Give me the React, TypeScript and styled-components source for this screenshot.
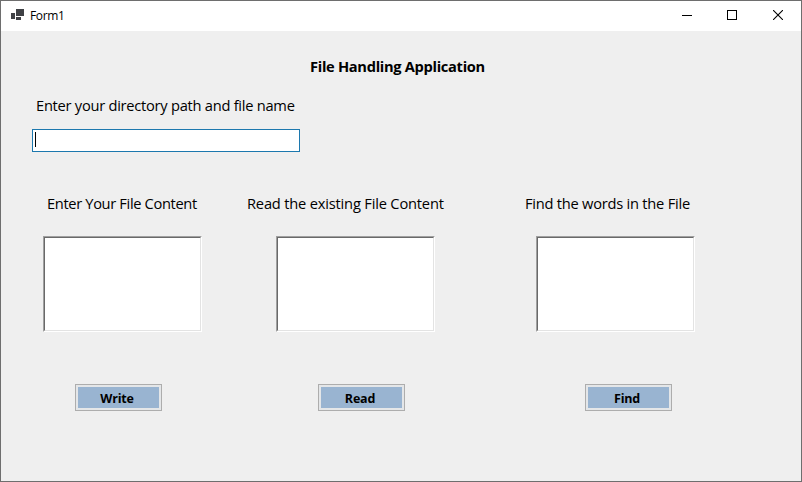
import React from "react";
import styled, { createGlobalStyle } from "styled-components";

const GlobalStyle = createGlobalStyle`
  *, *::before, *::after { box-sizing: border-box; }
  body { margin: 0; font-family: "Open Sans", "Noto Sans", sans-serif; color: #000; }
`;

const Window = styled.div`
  width: 802px;
  height: 482px;
  display: flex;
  flex-direction: column;
  border: 1px solid #6e6e6e;
  background: #efefef;
  overflow: hidden;
`;

const TitleBar = styled.header`
  flex: none;
  height: 30px;
  display: flex;
  align-items: center;
  background: #fff;
  padding-left: 10px;
`;

const AppIcon = styled.svg`
  margin-bottom: 2px;
`;

const WindowTitle = styled.span`
  flex: 1;
  padding-left: 6px;
  font-size: 12px;
  line-height: 28px;
  letter-spacing: -0.35px;
`;

const WindowButton = styled.button<{ $width: number }>`
  width: ${(p) => p.$width}px;
  height: 30px;
  padding: 0 0 2px;
  display: flex;
  align-items: center;
  justify-content: center;
  border: 0;
  background: transparent;
`;

const Form = styled.main`
  flex: 1;
  display: flex;
  flex-direction: column;
  align-items: flex-start;
`;

const Heading = styled.h1<{ $tracking: number }>`
  margin: 26px 0 2px 309px;
  font-size: 14.67px;
  font-weight: 700;
  line-height: 18px;
  white-space: nowrap;
  letter-spacing: ${(p) => p.$tracking}px;
`;

const Label = styled.label<{ $tracking: number; $indent?: number }>`
  margin: 0 0 2px ${(p) => p.$indent ?? 0}px;
  font-size: 14.67px;
  line-height: 18px;
  white-space: nowrap;
  letter-spacing: ${(p) => p.$tracking}px;
`;

const PathField = styled.div`
  display: flex;
  flex-direction: column;
  align-items: flex-start;
  gap: 13px;
  margin: 19px 0 0 31px;
`;

const PathInput = styled.div`
  width: 268px;
  height: 23px;
  padding: 2px;
  border: 1px solid #1c78ae;
  background: #fff;
`;

const Caret = styled.div`
  width: 1px;
  height: 15px;
  background: #000;
`;

const Columns = styled.section`
  display: grid;
  grid-template-columns: 204px 278px 200px;
  margin: 42px 0 0 42px;
`;

const Column = styled.div`
  display: flex;
  flex-direction: column;
  align-items: flex-start;
`;

const TextArea = styled.div<{ $indent: number }>`
  width: 159px;
  height: 96px;
  margin: 22px 0 0 ${(p) => p.$indent}px;
  border: 1px solid;
  border-color: #a0a0a0 #fff #fff #a0a0a0;
  background: #fff;

  &::before {
    content: "";
    display: block;
    height: 100%;
    border: 1px solid;
    border-color: #696969 #e3e3e3 #e3e3e3 #696969;
  }
`;

const ActionButton = styled.button<{ $indent: number }>`
  width: 87px;
  height: 27px;
  margin: 52px 0 0 ${(p) => p.$indent}px;
  padding: 2px 3px 0 0;
  border: 1px solid #adadad;
  box-shadow: inset 0 0 0 2px #e4e6e8;
  background: #99b4d1;
  color: #000;
  font: 700 12.5px/23px "Open Sans", "Noto Sans", sans-serif;
  letter-spacing: -0.2px;
  text-align: center;
`;

const columns = [
  { label: "Enter Your File Content", tracking: -0.35, labelIndent: 4, boxIndent: 0, action: "Write", buttonIndent: 32 },
  { label: "Read the existing File Content", tracking: -0.19, labelIndent: 0, boxIndent: 29, action: "Read", buttonIndent: 71 },
  { label: "Find the words in the File", tracking: -0.24, labelIndent: 0, boxIndent: 11, action: "Find", buttonIndent: 60 },
];

export default function App() {
  return (
    <>
      <GlobalStyle />
      <Window>
        <TitleBar>
          <AppIcon width="13" height="12" viewBox="0 0 13 12" fill="#3f4145" shapeRendering="crispEdges">
            <rect x="5" y="0" width="8" height="7" />
            <rect x="0" y="4" width="4" height="6" />
            <rect x="5" y="8" width="5" height="3" />
          </AppIcon>
          <WindowTitle>Form1</WindowTitle>
          <WindowButton $width={44} aria-label="Minimize">
            <svg width="10" height="10" shapeRendering="crispEdges">
              <rect y="5" width="10" height="1" />
            </svg>
          </WindowButton>
          <WindowButton $width={46} aria-label="Maximize">
            <svg width="10" height="10" shapeRendering="crispEdges">
              <rect x="0.5" y="0.5" width="9" height="9" fill="none" stroke="#000" />
            </svg>
          </WindowButton>
          <WindowButton $width={46} aria-label="Close">
            <svg width="10" height="10">
              <path d="M0 0L10 10M10 0L0 10" stroke="#000" strokeWidth="1.1" />
            </svg>
          </WindowButton>
        </TitleBar>
        <Form>
          <Heading $tracking={-0.31}>File Handling Application</Heading>
          <PathField>
            <Label $tracking={-0.26} $indent={4}>Enter your directory path and file name</Label>
            <PathInput>
              <Caret />
            </PathInput>
          </PathField>
          <Columns>
            {columns.map((c) => (
              <Column key={c.action}>
                <Label $tracking={c.tracking} $indent={c.labelIndent}>{c.label}</Label>
                <TextArea $indent={c.boxIndent} />
                <ActionButton $indent={c.buttonIndent}>{c.action}</ActionButton>
              </Column>
            ))}
          </Columns>
        </Form>
      </Window>
    </>
  );
}
